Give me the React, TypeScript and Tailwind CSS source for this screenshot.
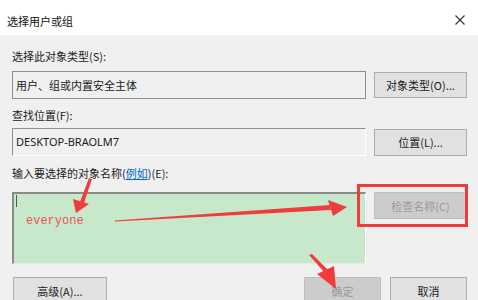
import React from "react";

const cjk = { fontFamily: '"Noto Sans CJK SC", "Noto Sans", sans-serif' };

export default function App() {
  return (
    <div className="relative w-[478px] h-[300px] overflow-hidden bg-[#f0f0f0] text-[11px] leading-[14px] text-[#1a1a1a]" style={cjk}>
      {/* title bar */}
      <div className="h-[35px] bg-white flex items-center justify-between pl-[7px] pr-[13px]">
        <span className="text-[11px] mt-[7px] text-[#111]">选择用户或组</span>
        <svg width="10" height="10" viewBox="0 0 10 10" className="mt-[5px]">
          <path d="M0.5 0.5 L9.5 9.5 M9.5 0.5 L0.5 9.5" stroke="#333" strokeWidth="1.1" />
        </svg>
      </div>

      <div className="pl-[12px] pr-[11px] flex flex-col">
        <div className="mt-[14px]">选择此对象类型(S):</div>
        <div className="mt-[8px] flex items-center gap-[8px]">
          <div className="w-[354px] h-[28px] border border-[#8e8e8e] flex items-center pl-[3px] pb-[1px]">用户、组或内置安全主体</div>
          <div className="w-[93px] h-[26px] bg-[#e1e1e1] border border-[#adadad] flex items-center justify-center">对象类型(O)...</div>
        </div>

        <div className="mt-[9px]">查找位置(F):</div>
        <div className="mt-[6px] flex items-center gap-[8px]">
          <div className="w-[354px] h-[28px] border border-[#8e8e8e] border-r-white border-b-white flex items-center pl-[3px] pb-[1px]" style={{ fontFamily: '"Noto Sans", sans-serif' }}>DESKTOP-BRAOLM7</div>
          <div className="w-[93px] h-[27px] bg-[#e1e1e1] border border-[#adadad] flex items-center justify-center">位置(L)...</div>
        </div>

        <div className="mt-[10px]">
          输入要选择的对象名称(<span className="text-[#0066cc] underline">例如</span>)(E):
        </div>
        <div className="mt-[12px] flex items-start gap-[8px]">
          <div className="w-[354px] h-[72px] bg-[#c8e8cc] border-t-2 border-l-2 border-[#8a8a8a] border-r border-b border-r-white border-b-[#e8e8e8] relative">
            <div className="absolute left-[2px] top-[1px] w-[1px] h-[12px] bg-[#555]" />
            <div className="absolute left-[12px] top-[20px] text-[12px] leading-[14px] text-[#e85555]" style={{ fontFamily: '"Liberation Mono", monospace' }}>everyone</div>
          </div>
          <div className="w-[93px] h-[27px] bg-[#cccccc] border border-[#bfbfbf] flex items-center justify-center text-[#9a9a9a]">检查名称(C)</div>
        </div>

        <div className="mt-[13px] flex items-start">
          <div className="w-[94px] h-[30px] ml-[1px] bg-[#e1e1e1] border border-[#adadad] flex items-center justify-center pb-[3px]">高级(A)...</div>
          <div className="flex-1" />
          <div className="w-[77px] h-[30px] bg-[#cccccc] border border-[#bfbfbf] flex items-center justify-center pb-[3px] text-[#9a9a9a]">确定</div>
          <div className="w-[77px] h-[30px] ml-[9px] bg-[#e1e1e1] border border-[#adadad] flex items-center justify-center pb-[3px]">取消</div>
        </div>
      </div>

      {/* red highlight rectangle */}
      <div className="absolute left-[357px] top-[184px] w-[111px] h-[43px] border-[3px] border-[#f03c3c]" />

      {/* annotation arrows */}
      <svg className="absolute left-0 top-0" width="478" height="300" viewBox="0 0 478 300">
        <g fill="#f03c3c">
          {/* arrow 1 */}
          <polygon points="89,178 92,179 84,203 80,202" />
          <polygon points="73,199 89,204 76,213" />
          {/* arrow 2 */}
          <polygon points="115,220.5 330,205 331,210 115,221.5" />
          <polygon points="328,200 347,207 333,216" />
          {/* arrow 3 */}
          <polygon points="309,255 312,254 328,270 325,273" />
          <polygon points="317,274 334,266 336,289" />
        </g>
      </svg>
    </div>
  );
}
